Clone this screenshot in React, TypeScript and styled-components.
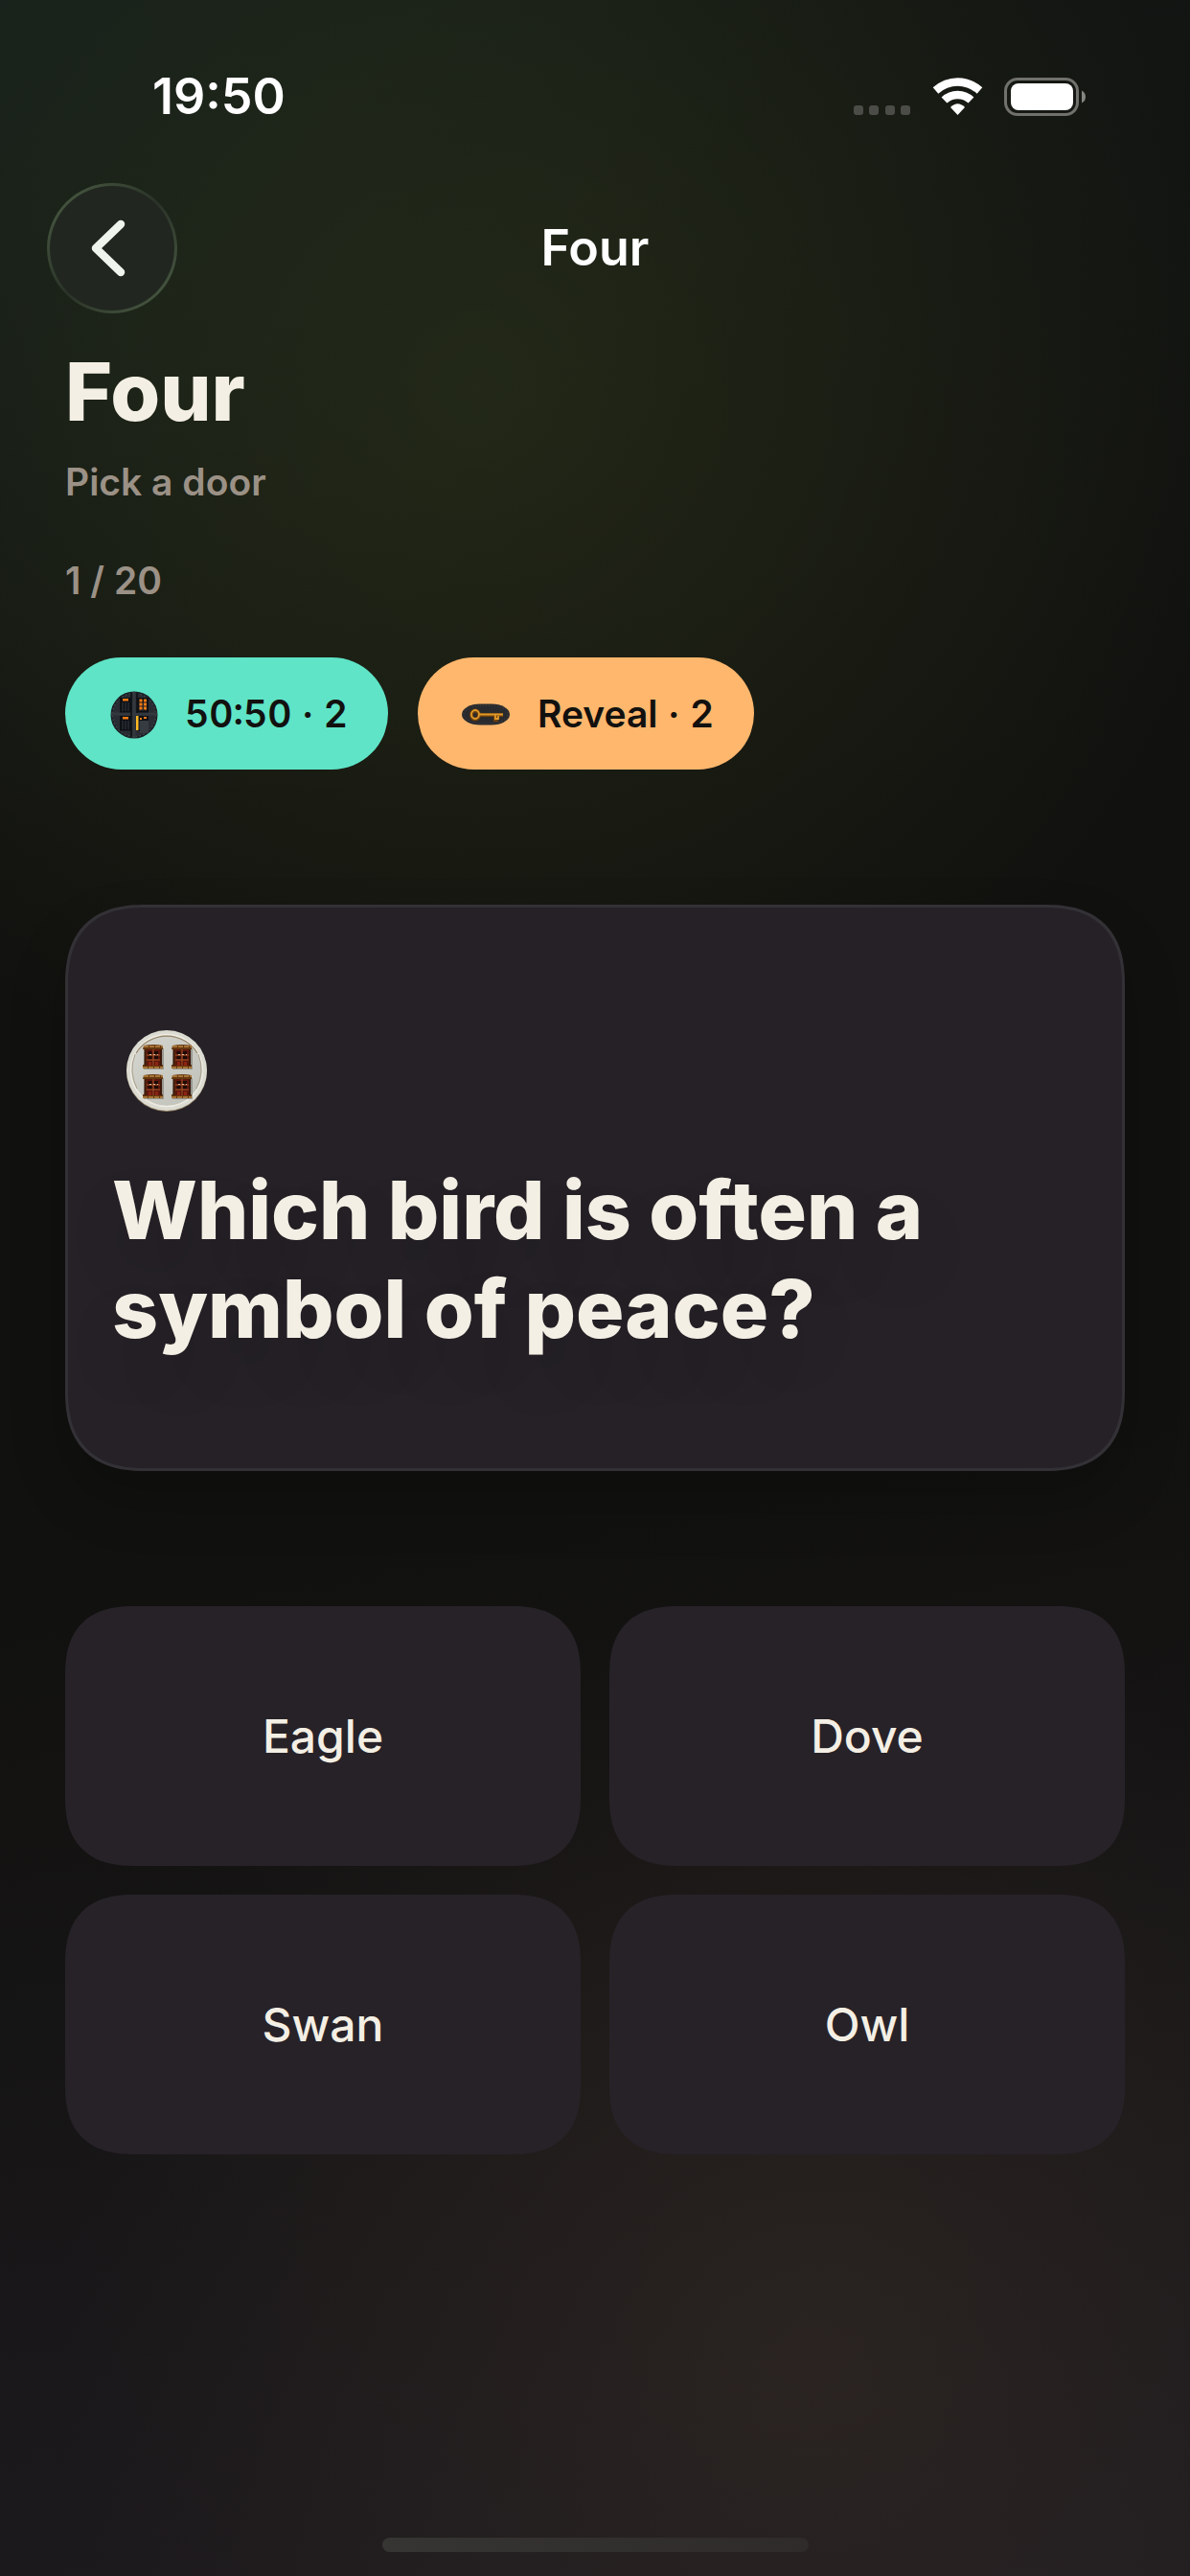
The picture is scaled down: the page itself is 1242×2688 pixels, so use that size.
import React from "react";
import styled, { createGlobalStyle } from "styled-components";

const GlobalStyle = createGlobalStyle`
  * { box-sizing: border-box; }
  body { margin: 0; background: #11110f; }
  h1, h2, p { margin: 0; }
  button { border: 0; padding: 0; font: inherit; cursor: pointer; }
`;

const cream = "#f4efe4";

const Screen = styled.div`
  min-height: 100vh;
  display: flex;
  flex-direction: column;
  font-family: Inter, "Liberation Sans", sans-serif;
  color: ${cream};
  background:
    radial-gradient(circle 800px at 40% 15%, rgba(56, 64, 28, 0.42), rgba(56, 64, 28, 0.26) 45%, rgba(56, 64, 28, 0) 100%),
    radial-gradient(circle 780px at 68% 91%, rgba(76, 60, 46, 0.3), rgba(76, 60, 46, 0) 100%),
    radial-gradient(circle 900px at 0% 0%, rgba(24, 40, 36, 0.5), rgba(24, 40, 36, 0) 100%),
    linear-gradient(170deg, #121613 0%, #11110f 35%, #11110f 58%, #1e1b1f 100%);
`;

const StatusBar = styled.div`
  display: flex;
  align-items: center;
  justify-content: space-between;
  height: 191px;
  padding: 10px 108px 0 159px;
  color: #fff;
`;

const Clock = styled.span`
  font-size: 52px;
  line-height: 60px;
  font-weight: 600;
`;

const StatusIcons = styled.svg`
  display: block;
`;

const NavBar = styled.nav`
  display: grid;
  grid-template-columns: 1fr auto 1fr;
  align-items: center;
  padding: 0 49px;
`;

const BackButton = styled.button`
  display: flex;
  align-items: center;
  justify-content: center;
  width: 136px;
  height: 136px;
  padding-right: 8px;
  border: 3px solid transparent;
  border-radius: 50%;
  background:
    linear-gradient(#212620, #212620) padding-box,
    linear-gradient(135deg, #465640 10%, #2a3227 50%, #465640 90%) border-box;
`;

const NavTitle = styled.span`
  font-size: 52px;
  line-height: 60px;
  font-weight: 600;
  color: #fff;
`;

const Content = styled.main`
  display: flex;
  flex-direction: column;
  padding: 32px 68px 0;
`;

const Title = styled.h1`
  font-size: 84px;
  line-height: 100px;
  font-weight: 800;
`;

const Caption = styled.p<{ $gap: number }>`
  margin-top: ${(p) => p.$gap}px;
  font-size: 39px;
  line-height: 48px;
  font-weight: 600;
  color: #9b9186;
`;

const Lifelines = styled.div`
  display: flex;
  gap: 31px;
  margin-top: 56px;
`;

const Lifeline = styled.button<{ $color: string }>`
  display: flex;
  align-items: center;
  gap: 25px;
  height: 117px;
  padding: 0 42px 0 44px;
  border-radius: 59px;
  background: ${(p) => p.$color};
  color: #12110f;
  font-size: 39px;
  line-height: 48px;
  font-weight: 600;
  font-variant-numeric: tabular-nums;
  white-space: nowrap;
`;

const QuestionCard = styled.section`
  display: flex;
  flex-direction: column;
  gap: 37px;
  margin-top: 141px;
  padding: 113px 46px 115px;
  border: 3px solid #343136;
  border-radius: 72px;
  background: #252127;
  box-shadow: 0 30px 60px rgba(0, 0, 0, 0.2);

  @supports (corner-shape: superellipse(1.3)) {
    border-radius: 84px;
    corner-shape: superellipse(1.3);
  }
`;

const Question = styled.h2`
  font-size: 84px;
  line-height: 103px;
  font-weight: 800;
  text-shadow: 0 30px 60px rgba(0, 0, 0, 0.12);
`;

const Answers = styled.div`
  display: grid;
  grid-template-columns: 1fr 1fr;
  gap: 30px;
  margin-top: 141px;
`;

const Answer = styled.button`
  height: 271px;
  border-radius: 60px;
  background: #272228;
  color: ${cream};
  font-size: 48px;
  line-height: 58px;
  font-weight: 500;

  @supports (corner-shape: superellipse(1.3)) {
    border-radius: 72px;
    corner-shape: superellipse(1.3);
  }
`;

const HomeIndicator = styled.div`
  width: 445px;
  height: 15px;
  margin: auto auto 25px;
  border-radius: 8px;
  background: linear-gradient(90deg, #363533, #2e2b2a);
`;

const Status = () => (
  <StatusIcons width="244" height="42" viewBox="890 79 244 42" aria-hidden="true">
    {[891, 907, 924, 940].map((x) => (
      <rect key={x} x={x} y="109" width="10" height="10" rx="3" fill="#4b4c48" />
    ))}
    <g fill="none" stroke="#fff" strokeWidth="8.5">
      <path d="M976.5 93.5C990 81.5 1009 81.5 1022.500 93.500" />
      <path d="M985.500 103.500C993.500 96 1005.500 96 1013.500 103.500" />
    </g>
    <path fill="#fff" d="M992 111Q999.500 103.500 1007 111L999.500 119Z" />
    <rect x="1049.500" y="81.500" width="75" height="37" rx="12.500" fill="none" stroke="#70716d" strokeWidth="3" />
    <rect x="1055" y="86" width="65" height="28" rx="8" fill="#fff" />
    <path d="M1129 93.500Q1133 95.500 1133 100T1129 106.500Z" fill="#858682" />
  </StatusIcons>
);

const BackChevron = () => (
  <svg width="36" height="60" viewBox="0 0 36 60" aria-hidden="true">
    <path d="M31 5L5 30L31 55" fill="none" stroke="#eff4ec" strokeWidth="8.500" strokeLinecap="round" strokeLinejoin="round" />
  </svg>
);

const DarkDoorsIcon = () => (
  <svg width="56" height="56" viewBox="0 0 56 56" aria-hidden="true">
    <circle cx="28" cy="29" r="24.500" fill="#1c2025" />
    <circle cx="28" cy="29" r="22.500" fill="#292d33" stroke="#555a60" strokeWidth="1" strokeDasharray="1.500 2.500" />
    <path d="M28 5V53M4 28H52" stroke="#33383f" strokeWidth="3" />
    <path d="M25 6V52M31 6V27" stroke="#0d0f13" strokeWidth="1.500" />
    {[[13, 11], [31, 11], [13, 30], [31, 30]].map(([x, y]) => (
      <g key={`${x}-${y}`}>
        <rect x={x} y={y} width="12" height="15.500" fill="#0e1115" />
        <path d={`M${x + 3} ${y + 5}v9M${x + 6} ${y + 5}v9M${x + 9} ${y + 5}v9`} stroke="#343a42" />
      </g>
    ))}
    <path d="M34 35L43 35V48H34Z" fill="#363b42" />
    <g fill="#f47a17">
      <path d="M16 12h6v2.500h-6zM16 31h6v2.500h-6z" />
      {[12.5, 16.5, 20.5].map((y) => (
        <path key={y} d={`M33.500 ${y}h3v3h-3zM38 ${y}h3v3h-3z`} />
      ))}
      <path d="M34 32h2v2h-2zM38 31h3v2h-3z" />
    </g>
    <path d="M30 30h2.500v15h-2.500z" fill="#ffba24" />
  </svg>
);

const KeyIcon = () => (
  <svg width="56" height="56" viewBox="0 0 56 56" aria-hidden="true">
    <rect x="2" y="17.500" width="50" height="22" rx="19" ry="11" fill="#292a2d" />
    <rect x="4" y="19.500" width="46" height="18" rx="17" ry="9" fill="none" stroke="#45464a" strokeDasharray="1 2" />
    <g fill="none" stroke="#6f3f0b" strokeWidth="4">
      <ellipse cx="16" cy="29" rx="4" ry="4.500" />
      <path d="M20 29H45M37 29V34H40" />
    </g>
    <g fill="none" stroke="#e09a2b" strokeWidth="1.800">
      <ellipse cx="16" cy="28.500" rx="4" ry="4.500" />
      <path d="M20 28.500H45M37 29V33H40V30" />
    </g>
  </svg>
);

const FourDoorsIcon = () => (
  <svg width="114" height="114" viewBox="0 0 114 114" aria-hidden="true">
    <defs>
      <linearGradient id="plate" x1="0" y1="0" x2="1" y2="1">
        <stop offset="0" stopColor="#d5d6cf" />
        <stop offset="1" stopColor="#bfc0b8" />
      </linearGradient>
    </defs>
    <circle cx="57" cy="58" r="42" fill="#8c7c60" />
    <circle cx="57" cy="57" r="42" fill="#dcdbd2" />
    <circle cx="57" cy="57" r="37.500" fill="url(#plate)" stroke="#eeece3" strokeWidth="1.500" />
    <path d="M25 39A37.500 37.500 0 0 1 89 39" fill="none" stroke="#98876a" strokeWidth="1.300" />
    <path d="M24 40Q17 58 26 76M90 40Q97 58 88 76" fill="none" stroke="#aaa18c" />
    {[[32, 31], [62, 31], [32, 62], [62, 62]].map(([x, y]) => (
      <g key={`${x}-${y}`} transform={`translate(${x} ${y})`}>
        <path d="M2 3h20v22h-21z" fill="#77766e" opacity=".6" />
        <path d="M1 0Q11 -2 21 0V4H19V20H21V24H0V20H2V4H0Z" fill="#65380f" />
        <path d="M1 1H21M0 23H21" stroke="#bd8844" strokeWidth="1.500" strokeDasharray="5 1" />
        <path d="M2.500 4V21M19 4V21" stroke="#3b1709" strokeWidth="2" />
        <rect x="4" y="4" width="14" height="17" fill="#5d160d" />
        <path d="M5.500 6h4v3h-4zM12 6h4v3h-4zM5.500 11h4v3h-4zM12 11h4v3h-4z" fill="#1b0b08" />
        <path d="M11 4V21M4 10H18M4 15H18" stroke="#a05528" />
        <path d="M7 9.500H16" stroke="#d6b996" strokeDasharray="2 2" />
        <path d="M6 17h3v4h-3zM13 17h3v4h-3z" fill="#8a2513" />
      </g>
    ))}
  </svg>
);

const answers = ["Eagle", "Dove", "Swan", "Owl"];

export default function App() {
  return (
    <Screen>
      <GlobalStyle />
      <StatusBar>
        <Clock>19:50</Clock>
        <Status />
      </StatusBar>
      <NavBar>
        <BackButton type="button" aria-label="Back">
          <BackChevron />
        </BackButton>
        <NavTitle>Four</NavTitle>
      </NavBar>
      <Content>
        <Title>Four</Title>
        <Caption $gap={20}>Pick a door</Caption>
        <Caption $gap={55}>1 / 20</Caption>
        <Lifelines>
          <Lifeline type="button" $color="#5fe4c7">
            <DarkDoorsIcon />
            50:50 · 2
          </Lifeline>
          <Lifeline type="button" $color="#ffb76d">
            <KeyIcon />
            Reveal · 2
          </Lifeline>
        </Lifelines>
        <QuestionCard>
          <FourDoorsIcon />
          <Question>Which bird is often a symbol of peace?</Question>
        </QuestionCard>
        <Answers>
          {answers.map((answer) => (
            <Answer key={answer} type="button">
              {answer}
            </Answer>
          ))}
        </Answers>
      </Content>
      <HomeIndicator />
    </Screen>
  );
}
